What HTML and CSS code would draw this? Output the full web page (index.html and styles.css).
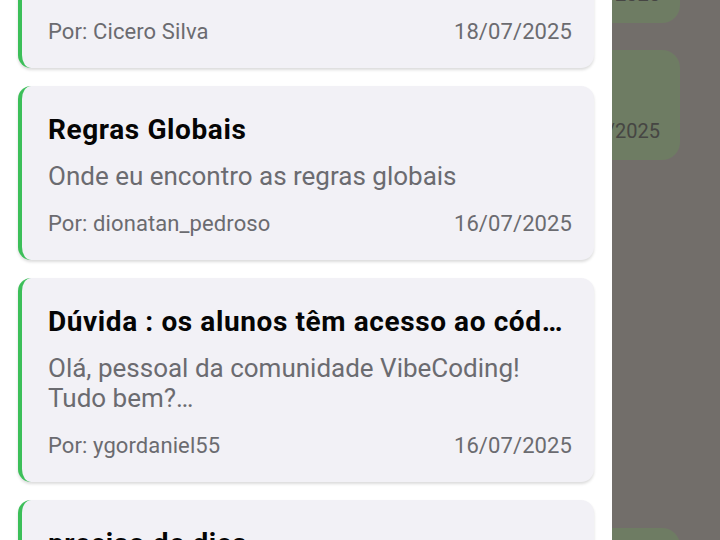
FILE: index.html
```html
<!DOCTYPE html>
<html lang="pt-BR">
<head>
<meta charset="utf-8">
<title>Tópicos</title>
<link rel="stylesheet" href="styles.css">
</head>
<body>
  <main class="chat">
    <div class="bubble sent first">
      <p class="bubble-text">Mensagem enviada<br>no grupo</p>
      <span class="bubble-date">18/07/2025</span>
    </div>
    <div class="bubble sent">
      <p class="bubble-text">Regras Globais<br>Onde eu encontro</p>
      <span class="bubble-date">16/07/2025</span>
    </div>
    <div class="bubble received">
      <p class="bubble-text">Olá, pessoal da comunidade VibeCoding!</p>
      <span class="bubble-date">16/07/2025</span>
    </div>
    <div class="bubble sent">
      <p class="bubble-text">preciso de dica</p>
      <span class="bubble-date">15/07/2025</span>
    </div>
  </main>

  <div class="scrim"></div>

  <aside class="drawer">
    <ul class="topics">
      <li class="card">
        <h2 class="card-title">Boas-vindas à comunidade</h2>
        <p class="card-body">Apresente-se para o grupo</p>
        <div class="card-meta"><span>Por: Cicero Silva</span><span>18/07/2025</span></div>
      </li>
      <li class="card">
        <h2 class="card-title">Regras Globais</h2>
        <p class="card-body">Onde eu encontro as regras globais</p>
        <div class="card-meta"><span>Por: dionatan_pedroso</span><span>16/07/2025</span></div>
      </li>
      <li class="card">
        <h2 class="card-title">Dúvida : os alunos têm acesso ao código do projeto?</h2>
        <p class="card-body">Olá, pessoal da comunidade VibeCoding!<br>Tudo bem?…</p>
        <div class="card-meta"><span>Por: ygordaniel55</span><span>16/07/2025</span></div>
      </li>
      <li class="card">
        <h2 class="card-title">preciso de dica</h2>
        <p class="card-body">Alguém pode me ajudar?</p>
        <div class="card-meta"><span>Por: membro</span><span>15/07/2025</span></div>
      </li>
    </ul>
  </aside>
</body>
</html>
```

FILE: styles.css
```css
* { box-sizing: border-box; }

html, body {
  margin: 0;
  padding: 0;
  height: 100%;
  overflow: hidden;
}

body {
  background: #e5ddd5;
  font-family: Roboto, "Noto Sans", "Liberation Sans", sans-serif;
}

/* background chat */
.chat {
  display: flex;
  flex-direction: column;
  align-items: flex-end;
  gap: 27px;
  padding: 0 40px 0 20px;
  margin-top: -87px;
}

.bubble {
  width: 420px;
  background: #dcf8c6;
  border-radius: 18px;
  padding: 16px 20px 17px;
  display: flex;
  flex-direction: column;
}

.bubble.received {
  align-self: flex-start;
  background: #ffffff;
  min-height: 314px;
  justify-content: space-between;
}

.bubble-text {
  margin: 0 0 5px;
  font-size: 20px;
  line-height: 24px;
  color: #1b1b1b;
  width: 300px;
}

.bubble-date {
  align-self: flex-end;
  font-size: 20px;
  line-height: 24px;
  color: #8c8c86;
}

.scrim {
  position: fixed;
  inset: 0;
  background: rgba(0, 0, 0, 0.5);
}

/* drawer */
.drawer {
  position: fixed;
  top: 0;
  left: 0;
  bottom: 0;
  width: 612px;
  background: #ffffff;
  overflow: hidden;
}

.topics {
  list-style: none;
  margin: -106px 0 0;
  padding: 0 18px 0 18px;
  display: flex;
  flex-direction: column;
  gap: 18px;
}

.card {
  background: #f2f1f6;
  border-left: 4px solid #3cbf59;
  border-radius: 13px;
  box-shadow: 0 2px 3px rgba(0, 0, 0, 0.14);
  padding: 27px 22px 23px 26px;
  min-width: 0;
}

.card-title {
  margin: 0;
  padding-right: 8px;
  font-size: 28px;
  line-height: 34px;
  letter-spacing: 0.6px;
  font-weight: 700;
  color: #050505;
  white-space: nowrap;
  overflow: hidden;
  text-overflow: ellipsis;
}

.card-body {
  margin: 14px 0 0;
  font-size: 26px;
  line-height: 30px;
  color: #6b6b70;
}

.card-meta {
  margin-top: 20px;
  display: flex;
  justify-content: space-between;
  font-size: 22px;
  line-height: 26px;
  letter-spacing: 0.1px;
  color: #6b6b70;
}
```
